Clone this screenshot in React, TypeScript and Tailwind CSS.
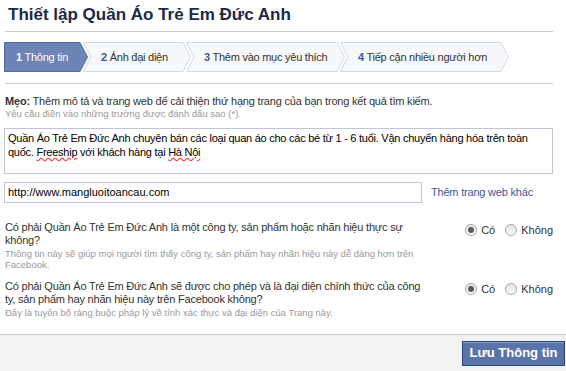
import { type FC } from 'react';

const steps = [
  { n: '1', label: 'Thông tin', w: 84, active: true },
  { n: '2', label: 'Ảnh đại diện', w: 108, active: false },
  { n: '3', label: 'Thêm vào mục yêu thích', w: 159, active: false },
  { n: '4', label: 'Tiếp cận nhiều người hơn', w: 169, active: false },
];

const Step: FC<{ n: string; label: string; w: number; active: boolean; first: boolean }> = ({ n, label, w, active, first }) => {
  const pts = first
    ? `0.5,0.5 ${w - 8},0.5 ${w - 0.5},15 ${w - 8},29.5 0.5,29.5`
    : `0.5,0.5 ${w - 8},0.5 ${w - 0.5},15 ${w - 8},29.5 0.5,29.5 8,15`;
  return (
    <div
      className={`relative h-[30px] flex items-center shrink-0 ${first ? 'pl-[12px]' : 'pl-[18px] -ml-[5px]'}`}
      style={{ width: w }}
    >
      <svg className="absolute inset-0" width={w} height={30}>
        <polygon
          points={pts}
          fill={active ? '#6d84b4' : '#f7f8fa'}
          stroke={active ? '#4f68a0' : '#d3d9e5'}
          strokeWidth="1"
        />
      </svg>
      <span className={`relative text-[11px] tracking-[-0.25px] whitespace-nowrap ${active ? 'text-white' : 'text-[#333]'}`}>
        <b className={active ? 'text-white' : 'text-[#3b5998]'}>{n}</b> {label}
      </span>
    </div>
  );
};

const Radio: FC<{ checked?: boolean }> = ({ checked }) => (
  <span className="w-[12px] h-[12px] rounded-full border border-[#a8a8a8] bg-gradient-to-b from-[#e4e4e4] to-[#fbfbfb] flex items-center justify-center">
    {checked && <span className="w-[6px] h-[6px] rounded-full bg-[#5a5a5a]" />}
  </span>
);

const Choice: FC = () => (
  <div className="flex items-center gap-[4px] text-[11px] text-[#333] pt-[1px]">
    <Radio checked />
    <span className="mr-[6px]">Có</span>
    <Radio />
    <span>Không</span>
  </div>
);

export default function App() {
  return (
    <div className="w-[566px] h-[371px] bg-white flex flex-col font-['Liberation_Sans',Arial,sans-serif] overflow-hidden">
      {/* Title */}
      <div className="px-[5px]">
        <h1 className="pl-[3px] pt-[4px] h-[32px] border-b border-[#ccc] w-[548px] text-[17px] font-bold text-[#1c2a47] leading-[22px]">
          Thiết lập Quần Áo Trẻ Em Đức Anh
        </h1>
      </div>

      {/* Steps */}
      <div className="flex pl-[4px] mt-[10px]">
        {steps.map((s, i) => (
          <Step key={i} {...s} first={i === 0} />
        ))}
      </div>
      <div className="mx-[5px] mt-[11px] w-[548px] border-b border-[#ccc]" />

      {/* Tip */}
      <div className="px-[5px] pt-[10px] text-[11px] tracking-[-0.2px] text-[#333] leading-[14px]">
        <p>
          <b>Mẹo:</b> Thêm mô tả và trang web để cải thiện thứ hạng trang của bạn trong kết quả tìm kiếm.
        </p>
        <p className="text-[9.5px] tracking-normal text-[#999] leading-[12px]">Yêu cầu điền vào những trường được đánh dấu sao (*).</p>
      </div>

      {/* Description */}
      <div className="mx-[4px] mt-[8px] w-[549px] h-[46px] border border-[#bdc7d8] px-[3px] py-[2px] text-[11px] tracking-[-0.25px] text-black leading-[14px]">
        Quần Áo Trẻ Em Đức Anh chuyên bán các loại quan áo cho các bé từ 1 - 6 tuổi. Vận chuyển hàng hóa trên toàn
        quốc. <span className="inline-block leading-[14px] underline decoration-wavy decoration-red-500">Freeship</span> với khách hàng tại{' '}
        <span className="inline-block leading-[14px] underline decoration-wavy decoration-red-500">Hà Nội</span>
      </div>

      {/* Website */}
      <div className="flex items-center mx-[4px] mt-[8px]">
        <div className="w-[418px] h-[21px] border border-[#bdc7d8] px-[3px] flex items-center text-[11px] text-black">
          http://www.mangluoitoancau.com
        </div>
        <span className="ml-[9px] text-[11px] tracking-[-0.2px] text-[#3b5998]">Thêm trang web khác</span>
      </div>

      {/* Questions */}
      <div className="flex mx-[5px] mt-[18px]">
        <div className="w-[420px]">
          <p className="text-[11px] tracking-[-0.2px] text-[#333] leading-[13px]">
            Có phải Quần Áo Trẻ Em Đức Anh là một công ty, sản phẩm hoặc nhãn hiệu thực sự không?
          </p>
          <p className="text-[9.5px] text-[#999] leading-[11px] mt-[1px]">
            Thông tin này sẽ giúp mọi người tìm thấy công ty, sản phẩm hay nhãn hiệu này dễ dàng hơn trên Facebook.
          </p>
        </div>
        <div className="ml-auto pr-[8px]">
          <Choice />
        </div>
      </div>

      <div className="flex mx-[5px] mt-[10px]">
        <div className="w-[420px]">
          <p className="text-[11px] tracking-[-0.2px] text-[#333] leading-[13px]">
            Có phải Quần Áo Trẻ Em Đức Anh sẽ được cho phép và là đại diện chính thức của công ty, sản phẩm hay nhãn hiệu này trên Facebook không?
          </p>
          <p className="text-[9.5px] text-[#999] leading-[11px] mt-[1px]">
            Đây là tuyên bố ràng buộc pháp lý về tính xác thực và đại diện của Trang này.
          </p>
        </div>
        <div className="ml-auto pr-[8px]">
          <Choice />
        </div>
      </div>

      {/* Footer */}
      <div className="mt-auto h-[37px] border-t border-[#ccc] bg-[#f2f2f2] flex items-center justify-end pr-[1px]">
        <button className="h-[25px] w-[103px] bg-[#5b74a8] border border-[#29447e] text-white font-bold text-[13px] shadow-[inset_0_1px_0_#8a9cc2]">
          Lưu Thông tin
        </button>
      </div>
    </div>
  );
}
